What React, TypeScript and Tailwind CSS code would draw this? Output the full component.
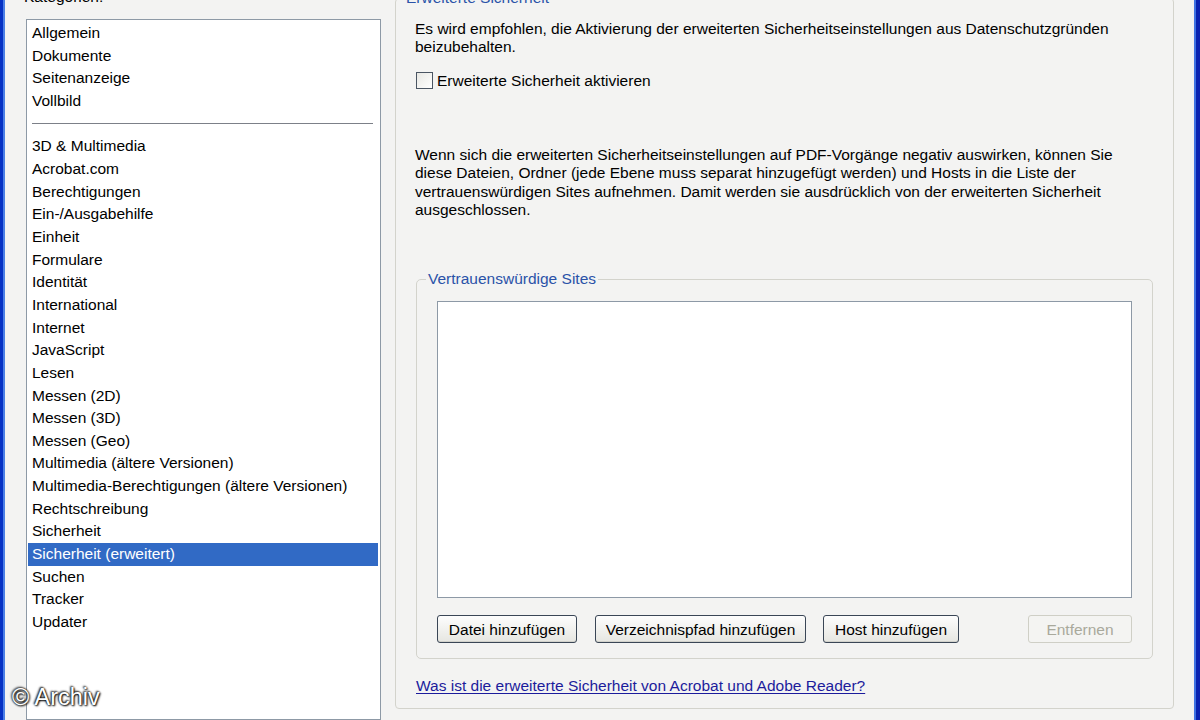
import React from "react";

const topItems = ["Allgemein", "Dokumente", "Seitenanzeige", "Vollbild"];
const items = [
  "3D & Multimedia",
  "Acrobat.com",
  "Berechtigungen",
  "Ein-/Ausgabehilfe",
  "Einheit",
  "Formulare",
  "Identität",
  "International",
  "Internet",
  "JavaScript",
  "Lesen",
  "Messen (2D)",
  "Messen (3D)",
  "Messen (Geo)",
  "Multimedia (ältere Versionen)",
  "Multimedia-Berechtigungen (ältere Versionen)",
  "Rechtschreibung",
  "Sicherheit",
  "Sicherheit (erweitert)",
  "Suchen",
  "Tracker",
  "Updater",
];

function Row({ label, selected }: { label: string; selected?: boolean }) {
  return (
    <div
      className={
        "h-[22.67px] leading-[22.67px] pl-[4px] whitespace-nowrap " +
        (selected ? "bg-[#316ac5] text-white" : "text-black")
      }
    >
      {label}
    </div>
  );
}

function Btn({ label, w, disabled }: { label: string; w: string; disabled?: boolean }) {
  return (
    <div
      className={
        "h-[28px] flex items-center justify-center rounded-[3px] border " +
        w +
        " " +
        (disabled
          ? "border-[#cfcfc6] bg-[#f4f4f2] text-[#a9a99c]"
          : "border-[#3a4656] bg-linear-to-b from-[#fdfdfd] to-[#e6e6e1] text-black shadow-[inset_0_-1px_0_#d2d2cc]")
      }
    >
      {label}
    </div>
  );
}

export default function App() {
  return (
    <div className="relative flex h-[720px] w-[1200px] overflow-hidden bg-[#f3f3f2] font-['Liberation_Sans',Arial,sans-serif] text-[15.5px] text-black">
      {/* left window border */}
      <div className="w-[5px] shrink-0 flex">
        <div className="w-[3px] bg-[#0631c4]" />
        <div className="w-[2px] bg-[#4b7fe6]" />
      </div>

      <div className="flex flex-1 pl-[21px]">
        {/* left column */}
        <div className="w-[355px] shrink-0 flex flex-col">
          <div className="-mt-[12px] -ml-[2px] leading-[18px] h-[18px] whitespace-nowrap">Kategorien:</div>
          <div className="mt-[13px] h-[760px] border border-[#8d99a6] bg-white pl-[1px] pr-[2px] pt-[2px]">
            {topItems.map((t) => (
              <Row key={t} label={t} />
            ))}
            <div className="h-[22.67px] flex items-center pl-[4px] pr-[5px]">
              <div className="h-[1px] w-full bg-[#7c8088]" />
            </div>
            {items.map((t) => (
              <Row key={t} label={t} selected={t === "Sicherheit (erweitert)"} />
            ))}
          </div>
        </div>

        {/* right group */}
        <fieldset className="-mt-[11px] ml-[14px] w-[779px] self-start border border-[#d3d3cc] rounded-[4px] p-0 m-0">
          <legend className="ml-[8px] px-[2px] leading-[18px] text-[#2a52a8] whitespace-nowrap">Erweiterte Sicherheit</legend>
          <div className="px-[19px] pt-[13px] pb-[13px] flex flex-col">
            <p className="leading-[18.4px] whitespace-nowrap">
              Es wird empfohlen, die Aktivierung der erweiterten Sicherheitseinstellungen aus Datenschutzgründen
              <br />
              beizubehalten.
            </p>
            <div className="mt-[15px] h-[18px] flex items-center">
              <div className="ml-[1px] h-[17px] w-[17px] border border-[#4a5563] bg-linear-to-br from-[#e8e8e4] to-white" />
              <span className="ml-[4px]">Erweiterte Sicherheit aktivieren</span>
            </div>
            <p className="mt-[56px] leading-[18.4px] whitespace-nowrap">
              Wenn sich die erweiterten Sicherheitseinstellungen auf PDF-Vorgänge negativ auswirken, können Sie
              <br />
              diese Dateien, Ordner (jede Ebene muss separat hinzugefügt werden) und Hosts in die Liste der
              <br />
              vertrauenswürdigen Sites aufnehmen. Damit werden sie ausdrücklich von der erweiterten Sicherheit
              <br />
              ausgeschlossen.
            </p>

            <fieldset className="mt-[51px] ml-[1px] w-[737px] border border-[#d3d3cc] rounded-[5px] p-0 m-0">
              <legend className="ml-[9px] px-[2px] leading-[18px] text-[#2a52a8]">Vertrauenswürdige Sites</legend>
              <div className="px-[20px] pt-[13px] pb-[15px]">
                <div className="h-[297px] border border-[#8d99a6] bg-white" />
                <div className="mt-[17px] flex items-center">
                  <Btn label="Datei hinzufügen" w="w-[140px]" />
                  <div className="w-[18px]" />
                  <Btn label="Verzeichnispfad hinzufügen" w="w-[211px]" />
                  <div className="w-[17px]" />
                  <Btn label="Host hinzufügen" w="w-[136px]" />
                  <div className="flex-1" />
                  <Btn label="Entfernen" w="w-[104px]" disabled />
                </div>
              </div>
            </fieldset>

            <div className="mt-[18px] ml-[1px] leading-[18px] text-[#1c1c9c] underline underline-offset-2">
              Was ist die erweiterte Sicherheit von Acrobat und Adobe Reader?
            </div>
          </div>
        </fieldset>

        <div className="flex-1" />
      </div>

      {/* right window border */}
      <div className="w-[7px] shrink-0 flex">
        <div className="w-[1px] bg-[#f6eef0]" />
        <div className="w-[2px] bg-[#3f73e2]" />
        <div className="w-[4px] bg-[#0a22b0]" />
      </div>

      {/* watermark */}
      <div className="absolute left-[12px] top-[682px] text-[23.5px] leading-[30px] text-white [text-shadow:0_0_2px_#000,1px_1px_2px_#000,-1px_-1px_2px_#333]">
        © Archiv
      </div>
    </div>
  );
}
